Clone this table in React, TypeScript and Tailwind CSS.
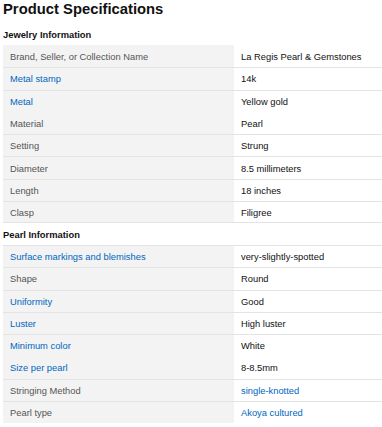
const jewelry = [
  { label: "Brand, Seller, or Collection Name", value: "La Regis Pearl & Gemstones", top: false },
  { label: "Metal stamp", value: "14k", top: true, labelLink: true },
  { label: "Metal", value: "Yellow gold", top: true, labelLink: true },
  { label: "Material", value: "Pearl", top: false },
  { label: "Setting", value: "Strung", top: true },
  { label: "Diameter", value: "8.5 millimeters", top: true },
  { label: "Length", value: "18 inches", top: true },
  { label: "Clasp", value: "Filigree", top: true },
];

const pearl = [
  { label: "Surface markings and blemishes", value: "very-slightly-spotted", top: true, labelLink: true },
  { label: "Shape", value: "Round", top: true },
  { label: "Uniformity", value: "Good", top: true, labelLink: true },
  { label: "Luster", value: "High luster", top: true, labelLink: true },
  { label: "Minimum color", value: "White", top: true, labelLink: true },
  { label: "Size per pearl", value: "8-8.5mm", top: false, labelLink: true },
  { label: "Stringing Method", value: "single-knotted", top: true, valueLink: true },
  { label: "Pearl type", value: "Akoya cultured", top: true, valueLink: true },
];

type Spec = { label: string; value: string; top: boolean; labelLink?: boolean; valueLink?: boolean };

function SpecRow({ spec, last }: { spec: Spec; last?: boolean }) {
  return (
    <div
      className={`flex h-[22.3px] box-border ${spec.top ? "border-t border-[#e3e3e3]" : ""} ${
        last ? "border-b border-[#e3e3e3]" : ""
      }`}
    >
      <div
        className={`flex w-[231px] shrink-0 items-center bg-[#f3f3f3] pl-[7px] pt-[1px] ${
          spec.labelLink ? "text-[#0066c0]" : "text-[#555555]"
        }`}
      >
        {spec.label}
      </div>
      <div
        className={`flex flex-1 items-center pl-[7px] pt-[1px] ${spec.valueLink ? "text-[#0066c0]" : "text-[#111111]"}`}
      >
        {spec.value}
      </div>
    </div>
  );
}

export default function App() {
  return (
    <div className="h-[427px] w-[382px] overflow-hidden bg-white pl-[3px] font-['Liberation_Sans',Arial,sans-serif] text-[9.35px]">
      <div className="h-[23px] text-[14.8px] font-bold leading-[19px] text-[#111111]">Product Specifications</div>
      <div className="flex h-[22px] items-center pt-[2px] font-bold text-[#111111]">Jewelry Information</div>
      <div>
        {jewelry.map((s, i) => (
          <SpecRow key={s.label} spec={s} last={i === jewelry.length - 1} />
        ))}
      </div>
      <div className="flex h-[21.6px] items-center pt-[2px] font-bold text-[#111111]">Pearl Information</div>
      <div>
        {pearl.map((s) => (
          <SpecRow key={s.label} spec={s} />
        ))}
      </div>
    </div>
  );
}
